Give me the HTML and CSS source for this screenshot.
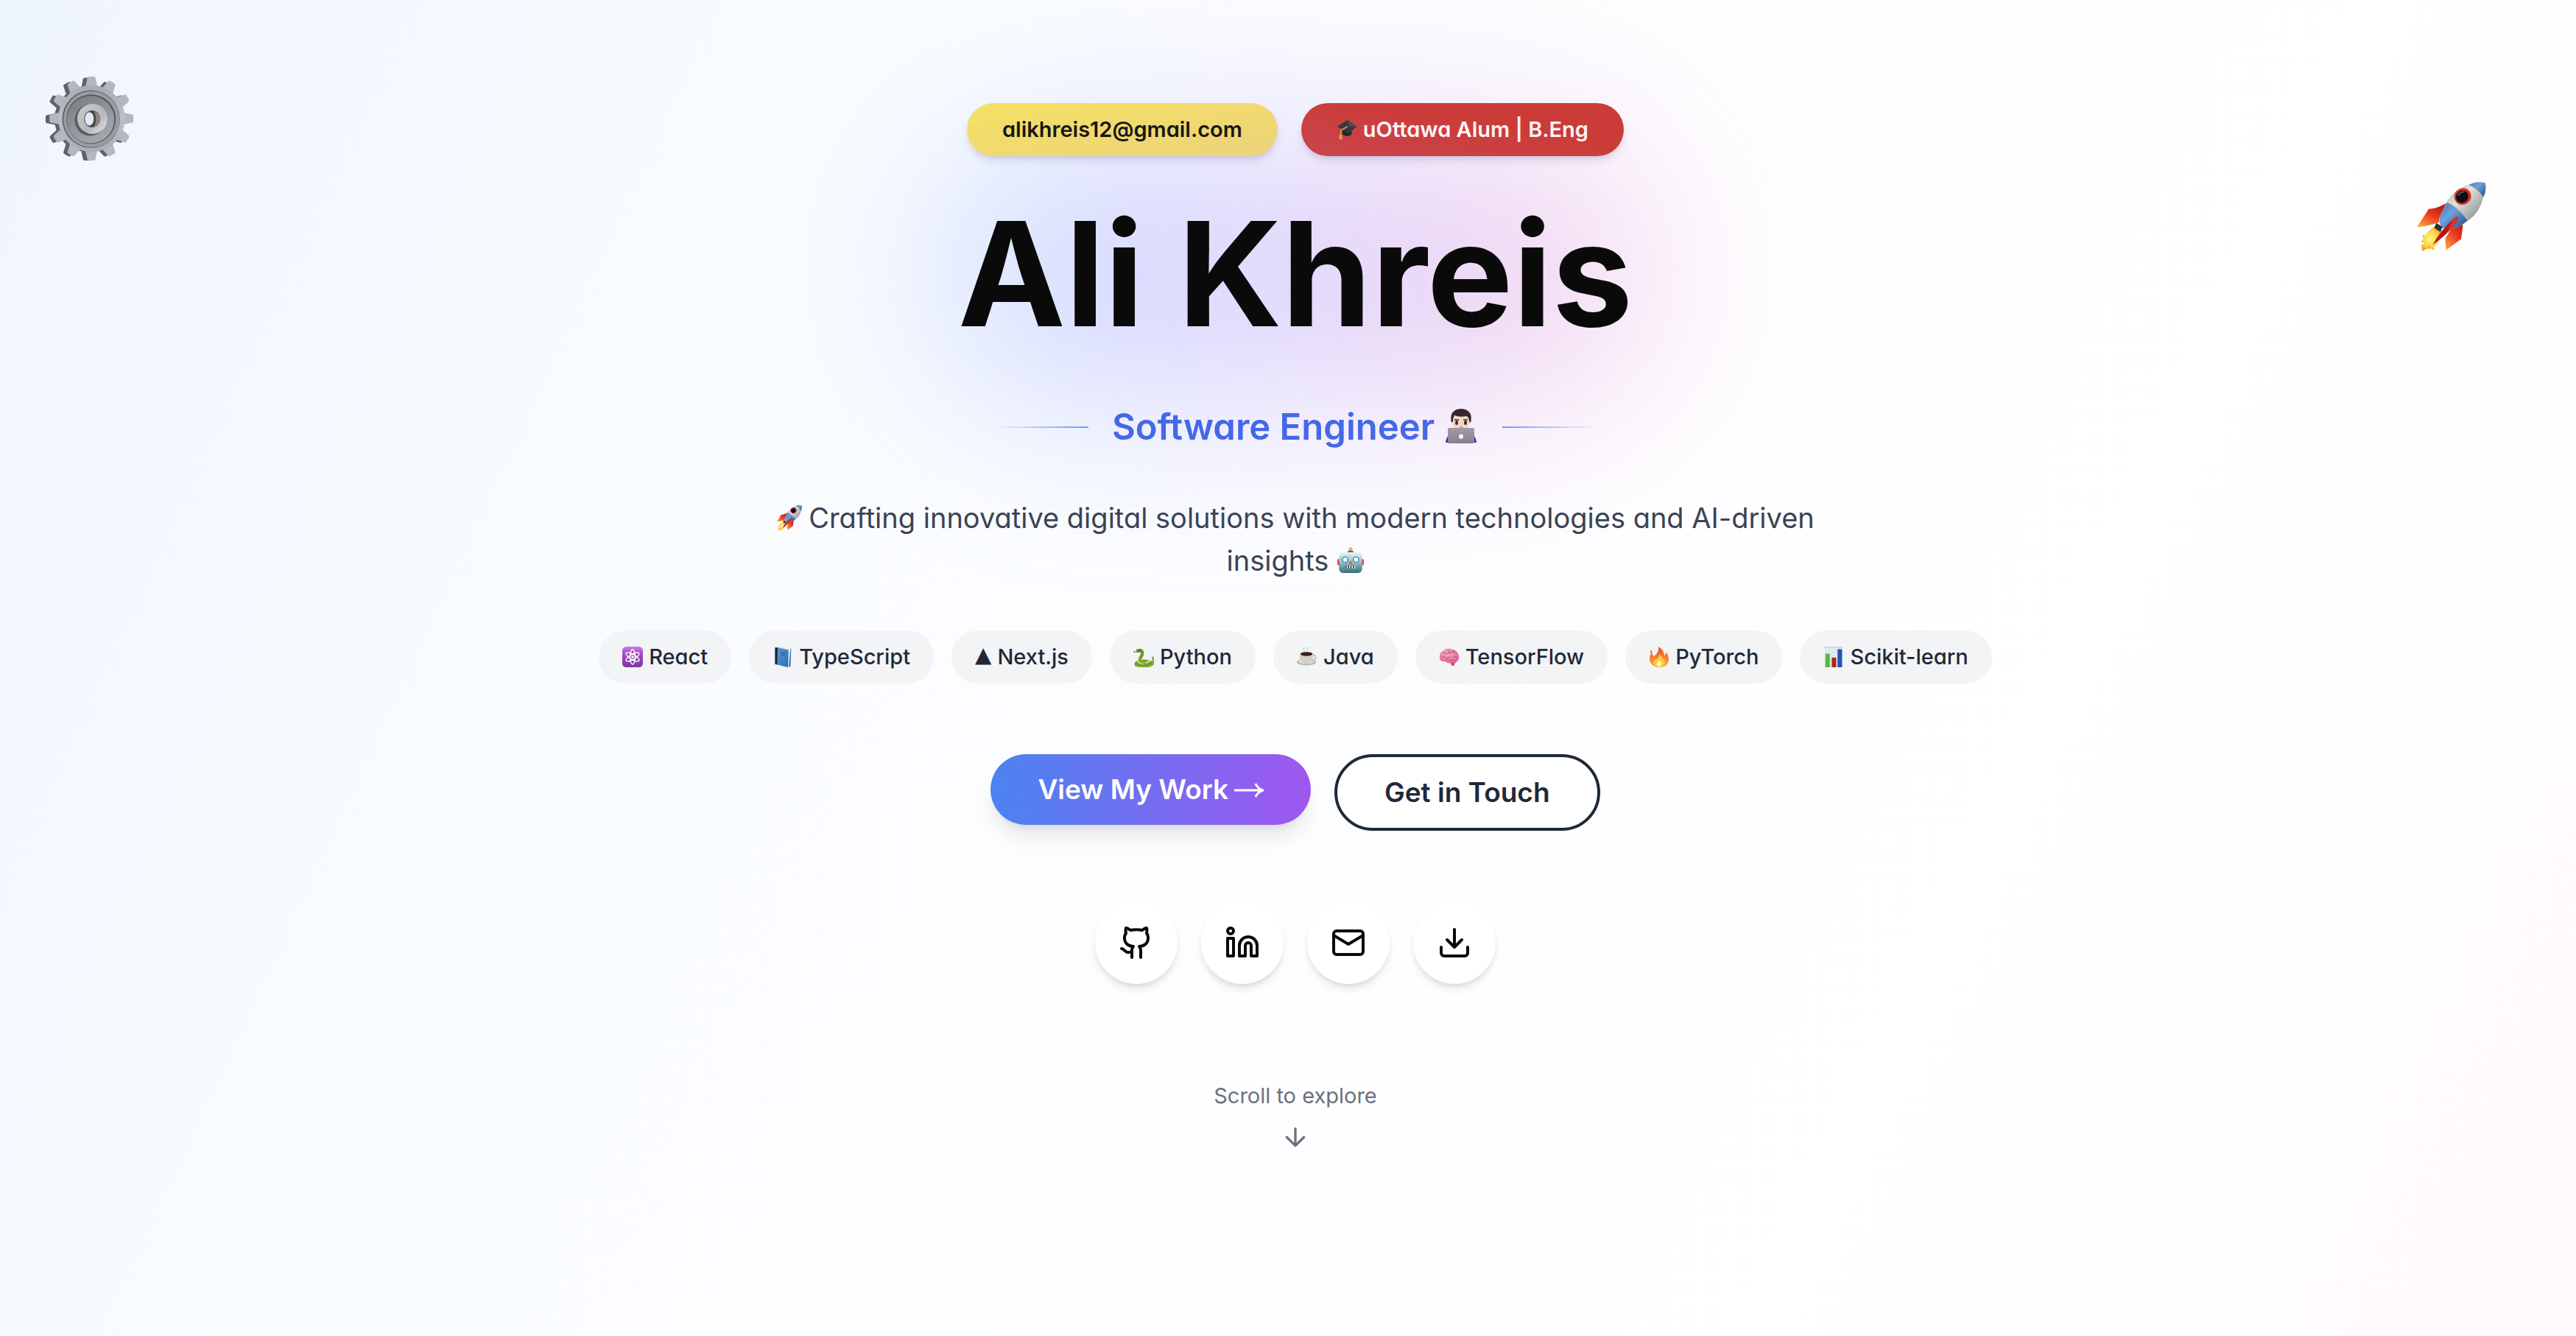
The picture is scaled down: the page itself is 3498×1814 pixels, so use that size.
FILE: index.html
```html
<!DOCTYPE html>
<html lang="en">
<head>
  <meta charset="utf-8">
  <meta name="viewport" content="width=device-width, initial-scale=1">
  <title>Ali Khreis</title>
  <link rel="stylesheet" href="styles.css">
</head>
<body>
  <svg class="sprite" aria-hidden="true">
    <defs>
      <linearGradient id="g-nose" x1="0" y1="0" x2="1" y2="1"><stop offset="0" stop-color="#3f70b4"/><stop offset=".4" stop-color="#6fa2dc"/><stop offset="1" stop-color="#1f4587"/></linearGradient>
      <linearGradient id="g-hull" x1="0" y1="0" x2="1" y2="1"><stop offset="0" stop-color="#8d969b"/><stop offset=".4" stop-color="#dfe3e3"/><stop offset=".7" stop-color="#a3aaa9"/><stop offset="1" stop-color="#4c5356"/></linearGradient>
      <linearGradient id="g-fin" x1=".8" y1="0" x2=".2" y2="1"><stop offset="0" stop-color="#b5160f"/><stop offset=".5" stop-color="#ee3a22"/><stop offset="1" stop-color="#f9a23a"/></linearGradient>
      <radialGradient id="g-flame" cx=".4" cy=".5" r=".6"><stop offset="0" stop-color="#fff38a"/><stop offset=".6" stop-color="#fbd23c"/><stop offset="1" stop-color="#f28a27"/></radialGradient>
      <linearGradient id="g-gear" x1="0" y1="0" x2="0" y2="1"><stop offset="0" stop-color="#a8acb2"/><stop offset=".5" stop-color="#bbbfc6"/><stop offset="1" stop-color="#a9adb5"/></linearGradient>
      <linearGradient id="g-gear-in" x1="0" y1="0" x2=".6" y2="1"><stop offset="0" stop-color="#777b80"/><stop offset="1" stop-color="#a4a8ae"/></linearGradient>
      <linearGradient id="g-hub" x1="0" y1="0" x2="1" y2="1"><stop offset="0" stop-color="#c9cbce"/><stop offset=".6" stop-color="#b5b7bb"/><stop offset="1" stop-color="#e6e7e9"/></linearGradient>
      <linearGradient id="g-atom" x1="0" y1="0" x2="0" y2="1"><stop offset="0" stop-color="#c77be0"/><stop offset=".35" stop-color="#a44bc6"/><stop offset="1" stop-color="#7f35a3"/></linearGradient>
      <linearGradient id="g-book" x1="0" y1="0" x2="1" y2="1"><stop offset="0" stop-color="#5b9bdb"/><stop offset="1" stop-color="#2f6bb0"/></linearGradient>
      <linearGradient id="g-fire" x1="0" y1="0" x2="0" y2="1"><stop offset="0" stop-color="#ea4a2a"/><stop offset=".6" stop-color="#f58a35"/><stop offset="1" stop-color="#f8b13d"/></linearGradient>
      <radialGradient id="g-brain" cx=".4" cy=".35" r=".7"><stop offset="0" stop-color="#f6b1c8"/><stop offset="1" stop-color="#d9648f"/></radialGradient>
      <linearGradient id="g-robot" x1="0" y1="0" x2="0" y2="1"><stop offset="0" stop-color="#eaf7f6"/><stop offset=".5" stop-color="#93bcc2"/><stop offset="1" stop-color="#2f717f"/></linearGradient>
      <linearGradient id="g-snake" x1="0" y1="0" x2="0" y2="1"><stop offset="0" stop-color="#5f8f26"/><stop offset="1" stop-color="#88b52f"/></linearGradient>
      <linearGradient id="g-laptop" x1="0" y1="0" x2="0" y2="1"><stop offset="0" stop-color="#a09ba6"/><stop offset="1" stop-color="#85808b"/></linearGradient>
      <path id="tooth" d="M229 112 L237 72 Q238 67 244 67 L264 67 Q270 67 271 72 L280 112Z"/>
    </defs>

    <symbol id="rocket" viewBox="92 76 292 292">
      <path d="M216 168 Q178 190 146 191 L98 265 Q148 260 186 246Z" fill="url(#g-fin)"/>
      <path d="M172 262 Q136 282 122 312 L126 330 L116 338 L119 362 L134 354 L158 352 Q196 322 204 282Z" fill="url(#g-flame)"/>
      <g fill="#f3a12f"><circle cx="124" cy="302" r="4"/><circle cx="120" cy="322" r="4"/><circle cx="164" cy="352" r="4"/><circle cx="128" cy="352" r="5"/><circle cx="146" cy="344" r="5"/></g>
      <path d="M262 228 L284 258 L277 313 L216 358 L212 312Z" fill="url(#g-fin)"/>
      <path d="M220 160 Q256 104 316 90 Q372 100 366 146 Q352 206 306 238 Q256 280 208 272 Q176 256 192 218Z" fill="url(#g-hull)"/>
      <path d="M220 164 Q262 180 304 236 Q262 276 212 272 Q178 254 194 212Z" fill="url(#g-nose)"/>
      <path d="M308 94 Q340 76 374 86 Q382 116 366 146 Q346 112 308 94Z" fill="url(#g-nose)"/>
      <path d="M308 94 Q346 112 366 146 M220 164 Q262 182 304 236" fill="none" stroke="#d9c477" stroke-width="3"/>
      <ellipse cx="283" cy="141" rx="35" ry="33" fill="#dc2a26" transform="rotate(-40 283 141)"/>
      <ellipse cx="281" cy="142" rx="26" ry="24" fill="#0c0f13" transform="rotate(-40 281 142)"/>
      <path d="M264 138 Q272 122 290 122" fill="none" stroke="#596067" stroke-width="5"/>
      <path d="M176 248 L202 264 L192 284 L168 268Z" fill="#273238"/>
      <path d="M258 222 Q268 222 264 234 Q240 280 162 336 Q196 272 258 222Z" fill="#b31812"/>
      <path d="M258 222 Q268 222 264 234 Q248 262 224 284 Q228 246 258 222Z" fill="#e62c25"/>
    </symbol>

    <symbol id="gear" viewBox="60 60 370 370">
      <g fill="#5d636a" transform="translate(-10 12) scale(.96)">
        <g id="teeth"><use href="#tooth"/><use href="#tooth" transform="rotate(30 254 242)"/><use href="#tooth" transform="rotate(60 254 242)"/><use href="#tooth" transform="rotate(90 254 242)"/><use href="#tooth" transform="rotate(120 254 242)"/><use href="#tooth" transform="rotate(150 254 242)"/><use href="#tooth" transform="rotate(180 254 242)"/><use href="#tooth" transform="rotate(210 254 242)"/><use href="#tooth" transform="rotate(240 254 242)"/><use href="#tooth" transform="rotate(270 254 242)"/><use href="#tooth" transform="rotate(300 254 242)"/><use href="#tooth" transform="rotate(330 254 242)"/></g>
        <circle cx="254" cy="242" r="138"/>
      </g>
      <g fill="#b3b7be" transform="translate(5 7) scale(.97)"><use href="#teeth"/></g>
      <circle cx="252" cy="242" r="135" fill="url(#g-gear)"/>
      <circle cx="250" cy="244" r="117" fill="#5c6167"/>
      <circle cx="252" cy="245" r="114" fill="#989ca2"/>
      <circle cx="250" cy="244" r="100" fill="#55595f"/>
      <circle cx="248" cy="246" r="96" fill="url(#g-gear-in)"/>
      <ellipse cx="246" cy="248" rx="62" ry="64" fill="#5d5a5c"/>
      <ellipse cx="255" cy="243" rx="61" ry="61" fill="url(#g-hub)"/>
      <ellipse cx="254" cy="243" rx="32" ry="34" fill="#4d4641"/>
      <path d="M262 212 Q286 222 285 246 Q282 268 262 276 Q278 244 262 212Z" fill="#8c8782"/>
      <ellipse cx="243" cy="243" rx="18" ry="27" fill="#dfe8f6"/>
    </symbol>

    <symbol id="cap" viewBox="0 0 32 32">
      <path d="M8 13 L24 16 L23 24 Q16 29 9 23Z" fill="#25262b"/>
      <path d="M17 1 L31 11 L19 22 L1 11Z" fill="#36373d"/>
      <path d="M17 1 L31 11 L19 12Z" fill="#4b4c53"/>
      <path d="M17 11 L7 17 L6 29" fill="none" stroke="#c8964a" stroke-width="2"/>
      <path d="M4 24 h4 l1 7 h-5Z" fill="#d6a252"/>
    </symbol>

    <symbol id="coder" viewBox="0 0 48 48">
      <path d="M3 47 Q4 36 12 34 L36 34 Q44 36 45 47Z" fill="#3c35a6"/>
      <path d="M12 14 Q11 30 24 32 Q37 30 36 14 Q24 4 12 14Z" fill="#f3d6c6"/>
      <path d="M11 20 Q7 2 24 1 Q41 2 37 20 L35 18 Q35 12 31 11 Q22 13 15 10 Q13 13 13 18Z" fill="#38262b"/>
      <ellipse cx="18" cy="20" rx="2" ry="3" fill="#47291f"/><ellipse cx="30" cy="20" rx="2" ry="3" fill="#47291f"/>
      <path d="M15 16 h6 M27 16 h6" stroke="#38262b" stroke-width="1.5"/>
      <path d="M22 26 h4" stroke="#c4766c" stroke-width="1.5"/>
      <rect x="6" y="27" width="36" height="21" rx="2" fill="url(#g-laptop)"/>
      <path d="M24 36 q3 -1 3 2 q0 4 -3 4 q-3 0 -3 -4 q0 -3 3 -2Z M24 35 l2 -2" fill="#f5f5f7"/>
    </symbol>

    <symbol id="robot" viewBox="0 0 32 32">
      <circle cx="16" cy="2.500" r="2.500" fill="#f4bd4f"/>
      <path d="M12 7 q0 -3 4 -3 q4 0 4 3Z" fill="#634d93"/>
      <rect x="0" y="14" width="4" height="8" rx="2" fill="#cf4a4d"/><rect x="28" y="14" width="4" height="8" rx="2" fill="#cf4a4d"/>
      <rect x="2" y="6" width="28" height="25" rx="5" fill="url(#g-robot)"/>
      <circle cx="9.500" cy="15" r="4" fill="#3d9ac0"/><circle cx="22.500" cy="15" r="4" fill="#3d9ac0"/>
      <circle cx="9.500" cy="15" r="2.500" fill="#fff"/><circle cx="22.500" cy="15" r="2.500" fill="#fff"/>
      <path d="M16 16 l2.500 4 h-5Z" fill="#dd5a4f"/>
      <rect x="10" y="22" width="12" height="4" rx="1" fill="#2b3c44"/>
      <path d="M12 22 v4 M15 22 v4 M18 22 v4 M21 22 v4" stroke="#f2f2f2" stroke-width="1.500"/>
    </symbol>

    <symbol id="atom" viewBox="0 0 32 32">
      <rect width="32" height="32" rx="6" fill="url(#g-atom)"/>
      <g fill="none" stroke="#fff" stroke-width="1.600"><ellipse cx="16" cy="16" rx="4" ry="11.500"/><ellipse cx="16" cy="16" rx="4" ry="11.500" transform="rotate(60 16 16)"/><ellipse cx="16" cy="16" rx="4" ry="11.500" transform="rotate(120 16 16)"/></g>
      <circle cx="16" cy="16" r="2" fill="#fff"/>
    </symbol>

    <symbol id="book" viewBox="0 0 32 32">
      <path d="M4 1 L10 0 L29 3 L28 30 L24 32 L4 27Z" fill="#e7ebee"/>
      <path d="M4 1 L8 1 L25 5 L24 32 L4 27Z" fill="url(#g-book)"/>
      <path d="M4 1 L8 2 L7 28 L4 27Z" fill="#17232f"/>
      <path d="M28 3 L29 3 L28 30 L25 32Z" fill="#3d78bb"/>
      <path d="M12 9 l8 1.500 M13 12 l6 1" stroke="#285b96" stroke-width="1.200"/>
    </symbol>

    <symbol id="snake" viewBox="0 0 32 32">
      <ellipse cx="17" cy="26" rx="15" ry="6" fill="#6d9a2a"/>
      <path d="M2 28 Q8 32 20 31 Q30 30 31 24 Q32 18 29 16" fill="none" stroke="#7faa35" stroke-width="3"/>
      <path d="M6 23 Q14 30 27 21" fill="none" stroke="#cbd98a" stroke-width="3"/>
      <path d="M5 7 Q13 3 14 10 Q14 14 11 17 Q8 24 20 25" fill="none" stroke="url(#g-snake)" stroke-width="5"/>
      <path d="M4 8 Q8 1 14 5 Q12 10 5 9Z" fill="#6a9529"/>
      <circle cx="9" cy="6" r="1" fill="#1c2410"/>
      <path d="M5 8 L0 7 M3 8 L0 10" stroke="#d9467a" stroke-width="1"/>
    </symbol>

    <symbol id="coffee" viewBox="0 0 32 32">
      <ellipse cx="15" cy="24" rx="15" ry="5" fill="#b9b3aa"/><ellipse cx="15" cy="23" rx="12" ry="3.500" fill="#e9e5df"/>
      <path d="M25 13 q6 0 4 5 q-2 4 -7 4" fill="none" stroke="#c4bfb7" stroke-width="2"/>
      <path d="M4 11 Q4 26 15 26 Q26 26 26 11Z" fill="#d3cec6"/>
      <ellipse cx="15" cy="11" rx="11" ry="4" fill="#ece9e4"/><ellipse cx="15" cy="11.500" rx="9.500" ry="3.200" fill="#3a2018"/>
      <path d="M12 6 q-3 -2 0 -5 M17 6 q-2 -3 1 -5" fill="none" stroke="#c9cbce" stroke-width="1.400"/>
    </symbol>

    <symbol id="brain" viewBox="0 0 32 32">
      <path d="M18 24 q0 5 3 6 q4 0 4 -7Z" fill="#c65a5f"/>
      <path d="M1 18 Q0 9 7 6 Q13 1 20 4 Q28 5 30 12 Q33 19 28 23 Q24 27 20 25 Q14 27 10 23 Q2 24 1 18Z" fill="url(#g-brain)"/>
      <g fill="none" stroke="#c2537f" stroke-width="1.200"><path d="M6 10 q4 -2 5 2 q4 -4 7 0 M14 5 q0 4 4 4 q4 -2 6 2 M4 17 q4 -3 8 1 q4 -4 8 0 M22 15 q4 -1 6 3 M10 22 q4 -4 8 0 q4 -3 7 1 M21 6 q3 1 4 3"/></g>
    </symbol>

    <symbol id="fire" viewBox="0 0 32 32">
      <path d="M15 0 Q24 6 24 14 Q27 12 27 8 Q31 14 31 20 Q30 32 16 32 Q2 31 1 19 Q1 13 5 9 Q5 13 8 15 Q16 9 15 0Z" fill="url(#g-fire)"/>
      <path d="M4 5 q-3 4 -1 5 q3 -1 1 -5Z" fill="#ea4a2a"/>
      <path d="M16 12 Q25 20 25 25 Q23 31 16 31 Q8 30 7 24 Q8 20 12 19 Q16 17 16 12Z" fill="#fbc93f"/>
      <path d="M16 21 Q21 25 20 28 Q18 31 16 31 Q12 30 12 27 Q13 24 16 21Z" fill="#fff6b0"/>
    </symbol>

    <symbol id="chart" viewBox="0 0 32 32">
      <rect x="2" width="28" height="32" fill="#e3e9f0"/><rect x="2" width="28" height="2" fill="#cfd5db"/>
      <rect x="3" y="11" width="7" height="21" fill="#56b73c"/><rect x="13" y="17" width="7" height="15" fill="#b02420"/><rect x="22" y="4" width="7" height="28" fill="#2453ba"/>
    </symbol>
  </svg>

  <main class="hero">
    <svg class="floater floater-gear" role="img" aria-label="Gear"><use href="#gear"/></svg>
    <svg class="floater floater-rocket" role="img" aria-label="Rocket"><use href="#rocket"/></svg>

    <div class="badges">
      <a class="badge badge-mail" href="mailto:alikhreis12@gmail.com">alikhreis12@gmail.com</a>
      <span class="badge badge-school"><svg class="emoji" aria-hidden="true"><use href="#cap"/></svg>uOttawa Alum | B.Eng</span>
    </div>

    <div class="title">
      <div class="glow"></div>
      <h1 class="name">Ali Khreis</h1>
    </div>

    <div class="role-row">
      <span class="rule rule-left"></span>
      <h2 class="role">Software Engineer<svg class="emoji" aria-hidden="true"><use href="#coder"/></svg></h2>
      <span class="rule rule-right"></span>
    </div>

    <p class="tagline"><svg class="emoji" aria-hidden="true"><use href="#rocket"/></svg>Crafting innovative digital solutions with modern technologies and AI-driven<br>insights<svg class="emoji emoji-end" aria-hidden="true"><use href="#robot"/></svg></p>

    <ul class="skills">
      <li class="chip"><svg class="emoji" aria-hidden="true"><use href="#atom"/></svg>React</li>
      <li class="chip"><svg class="emoji" aria-hidden="true"><use href="#book"/></svg>TypeScript</li>
      <li class="chip"><span class="triangle">▲</span>Next.js</li>
      <li class="chip"><svg class="emoji" aria-hidden="true"><use href="#snake"/></svg>Python</li>
      <li class="chip"><svg class="emoji" aria-hidden="true"><use href="#coffee"/></svg>Java</li>
      <li class="chip"><svg class="emoji" aria-hidden="true"><use href="#brain"/></svg>TensorFlow</li>
      <li class="chip"><svg class="emoji" aria-hidden="true"><use href="#fire"/></svg>PyTorch</li>
      <li class="chip"><svg class="emoji" aria-hidden="true"><use href="#chart"/></svg>Scikit-learn</li>
    </ul>

    <div class="actions">
      <button class="btn btn-primary" type="button">View My Work<svg class="arrow" viewBox="0 0 40 20" aria-hidden="true"><path d="M0 10h38M29 1q3 7 10 9q-7 2-10 9"/></svg></button>
      <button class="btn btn-outline" type="button">Get in Touch</button>
    </div>

    <nav class="social" aria-label="Profiles">
      <a class="social-link" href="#github" aria-label="GitHub"><svg class="icon" viewBox="0 0 24 24"><path d="M15 22v-4a4.8 4.8 0 0 0-1-3.500c3 0 6-2 6-5.500.08-1.250-.27-2.480-1-3.500.28-1.150.28-2.350 0-3.500 0 0-1 0-3 1.500-2.640-.5-5.360-.5-8 0C6 2 5 2 5 2c-.3 1.150-.3 2.350 0 3.500A5.403 5.403 0 0 0 4 9c0 3.500 3 5.500 6 5.500-.39.49-.68 1.050-.85 1.650-.17.6-.22 1.230-.15 1.850v4"/><path d="M9 18c-4.510 2-5-2-7-2"/></svg></a>
      <a class="social-link" href="#linkedin" aria-label="LinkedIn"><svg class="icon" viewBox="0 0 24 24"><path d="M16 8a6 6 0 0 1 6 6v7h-4v-7a2 2 0 0 0-4 0v7h-4v-7a6 6 0 0 1 6-6z"/><rect x="2" y="9" width="4" height="12"/><circle cx="4" cy="4" r="2"/></svg></a>
      <a class="social-link" href="#mail" aria-label="Email"><svg class="icon" viewBox="0 0 24 24"><rect x="2" y="4" width="20" height="16" rx="2"/><path d="M22 7l-10 6L2 7"/></svg></a>
      <a class="social-link" href="#resume" aria-label="Download resume"><svg class="icon" viewBox="0 0 24 24"><path d="M21 15v4a2 2 0 0 1-2 2H5a2 2 0 0 1-2-2v-4M7 10l5 5 5-5M12 15V3"/></svg></a>
    </nav>

    <div class="scroll">
      <span>Scroll to explore</span>
      <svg class="scroll-arrow" viewBox="0 0 24 24" aria-hidden="true"><path d="M12 5v14M19 12l-7 7-7-7"/></svg>
    </div>
  </main>
</body>
</html>
```
FILE: styles.css
```css
* {
  box-sizing: border-box;
}

body {
  margin: 0;
  font-family: Inter, "Open Sans", sans-serif;
  font-feature-settings: "cv11";
  color: #0a0a0a;
}

.sprite {
  position: absolute;
  width: 0;
  height: 0;
}

.hero {
  position: relative;
  display: flex;
  flex-direction: column;
  align-items: center;
  min-height: 100vh;
  padding: 140px 0 48px 20px;
  overflow: hidden;
  background: linear-gradient(115deg, #eff5ff, #f9fcff 28%, #fefeff 60%, #fff 75%, #fffafb);
}

.floater {
  position: absolute;
}

.floater-gear {
  top: 100px;
  left: 60px;
  width: 124px;
  height: 124px;
}

.floater-rocket {
  top: 245px;
  right: 120px;
  width: 98px;
  height: 98px;
}

.emoji {
  width: 28px;
  height: 28px;
  margin-right: 8px;
  vertical-align: -4px;
}

/* Badges */

.badges {
  position: relative;
  z-index: 1;
  display: flex;
  gap: 32px;
}

.badge {
  padding: 16px 48px;
  border-radius: 36px;
  font-size: 29px;
  font-weight: 600;
  line-height: 40px;
  text-decoration: none;
  box-shadow: 0 8px 12px -2px rgb(40 40 90 / 12%), 0 4px 8px -4px rgb(40 40 90 / 12%);
}

.badge-mail {
  color: #171717;
  background: linear-gradient(to bottom right, #f5e163, #ecd27b);
}

.badge-school {
  color: #fdf4f6;
  background: linear-gradient(to top right, #c9454f, #cb3c38 60%);
}

/* Title */

.title {
  position: relative;
  margin-top: 40px;
}

.glow {
  position: absolute;
  inset: -48px -24px;
  border-radius: 180px;
  background: linear-gradient(to right, #6f9dfb, #a58bfa 45%, #ee7cc4);
  opacity: 0.36;
  filter: blur(128px);
}

.name {
  position: relative;
  margin: 0;
  font-size: 196px;
  font-weight: 700;
  line-height: 240px;
}

.role-row {
  position: relative;
  display: flex;
  align-items: center;
  gap: 32px;
  margin-top: 56px;
}

.rule {
  width: 128px;
  height: 2px;
}

.rule-left {
  background: linear-gradient(to right, transparent, #6a9af0);
}

.rule-right {
  background: linear-gradient(to left, transparent, #6a9af0);
}

.role {
  margin: 0;
  font-size: 49px;
  font-weight: 600;
  line-height: 64px;
  color: #4468e6;
}

.role .emoji {
  width: 48px;
  height: 48px;
  margin: 0 0 0 12px;
  vertical-align: -5px;
}

.tagline {
  position: relative;
  margin: 62px 0 0;
  font-size: 38px;
  line-height: 58px;
  text-align: center;
  color: #3b4354;
}

.tagline .emoji {
  width: 36px;
  height: 36px;
}

.tagline .emoji-end {
  margin: 0 0 0 12px;
}

/* Skills */

.skills {
  display: flex;
  flex-wrap: wrap;
  justify-content: center;
  gap: 24px;
  margin: 66px 0 0;
  padding: 0;
  list-style: none;
}

.chip {
  padding: 16px 32px;
  border-radius: 36px;
  font-size: 29px;
  font-weight: 500;
  line-height: 40px;
  color: #1f2937;
  background: #f3f4f6;
}

.triangle {
  margin-right: 8px;
  font-family: "DejaVu Sans", sans-serif;
  line-height: 24px;
  vertical-align: 3px;
}

/* Actions */

.actions {
  display: flex;
  align-items: flex-start;
  gap: 32px;
  margin-top: 96px;
}

.btn {
  padding: 20px 64px;
  border: 0;
  border-radius: 52px;
  font: inherit;
  font-size: 37px;
  font-weight: 600;
  line-height: 56px;
}

.btn-primary {
  color: #fff;
  background: linear-gradient(to right, #4b83f1, #9f57ef);
  box-shadow: 0 20px 30px -6px rgb(0 0 0 / 10%), 0 8px 12px -8px rgb(0 0 0 / 10%);
}

.btn-outline {
  border: 4px solid #1f2937;
  color: #1f2937;
  background: #fff;
}

.arrow {
  width: 40px;
  height: 20px;
  margin-left: 8px;
  vertical-align: 2px;
  fill: none;
  stroke: currentColor;
  stroke-width: 3px;
}

/* Social links */

.social {
  display: flex;
  gap: 32px;
  margin-top: 96px;
}

.social-link {
  display: flex;
  align-items: center;
  justify-content: center;
  width: 112px;
  height: 112px;
  border-radius: 50%;
  color: #0a0a0a;
  background: #fff;
  box-shadow: 0 8px 12px -2px rgb(0 0 0 / 10%), 0 4px 8px -4px rgb(0 0 0 / 10%);
}

.icon,
.scroll-arrow {
  fill: none;
  stroke: currentColor;
  stroke-width: 2px;
  stroke-linecap: round;
  stroke-linejoin: round;
}

.icon {
  width: 48px;
  height: 48px;
}

.scroll {
  display: flex;
  flex-direction: column;
  align-items: center;
  gap: 16px;
  margin-top: 132px;
  font-size: 29px;
  line-height: 40px;
  color: #6b7280;
}

.scroll-arrow {
  width: 40px;
  height: 40px;
}
```
